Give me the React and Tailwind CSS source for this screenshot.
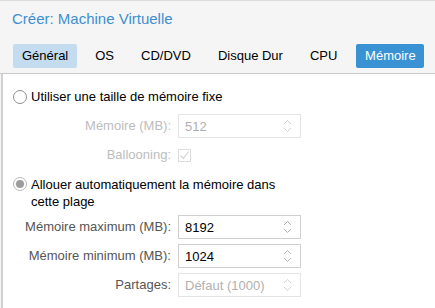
import React from "react";

const tabs = ["Général", "OS", "CD/DVD", "Disque Dur", "CPU", "Mémoire"];

const Spinner = ({ disabled }) => (
  <svg width="9" height="14" viewBox="0 0 9 14" className="shrink-0">
    <polyline
      points="1,5 4.5,1.5 8,5"
      fill="none"
      stroke={disabled ? "#d4d4d4" : "#b4b4b4"}
      strokeWidth="1"
    />
    <polyline
      points="1,9 4.5,12.5 8,9"
      fill="none"
      stroke={disabled ? "#d4d4d4" : "#b4b4b4"}
      strokeWidth="1"
    />
  </svg>
);

const NumberField = ({ value, disabled }) => (
  <div
    className={`w-[123px] h-[24px] flex items-center justify-between pl-[6px] pr-[8px] border bg-white ${
      disabled ? "border-[#e4e4e4] text-[#b0b0b0]" : "border-[#cfcfcf] text-black"
    }`}
  >
    <span className="pt-[2px]">{value}</span>
    <Spinner disabled={disabled} />
  </div>
);

const Row = ({ label, disabled, children }) => (
  <div className="flex items-center h-[24px]">
    <div
      className={`w-[168px] text-right ${
        disabled ? "text-[#bdbdbd]" : "text-[#555555]"
      }`}
    >
      {label}
    </div>
    <div className="ml-[7px]">{children}</div>
  </div>
);

const App = () => {
  return (
    <div className="w-[435px] h-[308px] overflow-hidden bg-[#f5f5f5] border-t border-[#dcdcdc] flex flex-col font-['Liberation_Sans',Arial,sans-serif] text-[13px]">
      {/* Title */}
      <div className="pt-[9px] pl-[12px] text-[15px] leading-[17px] text-[#3d8fd1]">
        Créer: Machine Virtuelle
      </div>

      {/* Tabs */}
      <div className="flex gap-[9px] pl-[13px] mt-[17px] pb-[5px] border-b border-[#c9c9c9]">
        {tabs.map((t) => (
          <div
            key={t}
            className={`h-[24px] flex items-center rounded-[2px] ${
              t === "Général"
                ? "px-[9px] bg-[#c4dcef] text-black"
                : t === "Mémoire"
                ? "ml-[1px] w-[68px] justify-center bg-[#3892d4] text-white"
                : "px-[9px] text-black"
            }`}
          >
            {t}
          </div>
        ))}
      </div>

      {/* Content */}
      <div className="flex-1 bg-white ml-px border-l-2 border-[#d2d2d2] pl-[10px] pt-[16px]">
        <div className="flex items-center h-[14px]">
          <span className="w-[14px] h-[14px] rounded-full border border-[#8f8f8f] bg-white" />
          <span className="ml-[4px] text-black">Utiliser une taille de mémoire fixe</span>
        </div>

        <div className="flex flex-col gap-[5px] mt-[10px] -ml-[10px]">
          <Row label="Mémoire (MB):" disabled>
            <NumberField value="512" disabled />
          </Row>
          <Row label="Ballooning:" disabled>
            <div className="w-[13px] h-[13px] border border-[#dcdcdc] flex items-center justify-center">
              <svg width="11" height="11" viewBox="0 0 11 11">
                <polyline
                  points="1.5,5.5 4.3,8.5 9.5,1.5"
                  fill="none"
                  stroke="#d0d0d0"
                  strokeWidth="1.1"
                />
              </svg>
            </div>
          </Row>
        </div>

        <div className="flex items-start mt-[9px]">
          <span className="mt-[1px] w-[14px] h-[14px] rounded-full border border-[#b8b8b8] bg-white flex items-center justify-center shrink-0">
            <span className="w-[8px] h-[8px] rounded-full bg-[#9c9c9c]" />
          </span>
          <span className="ml-[4px] leading-[17px] text-black w-[270px]">
            Allouer automatiquement la mémoire dans cette plage
          </span>
        </div>

        <div className="flex flex-col gap-[5px] mt-[5px] -ml-[10px]">
          <Row label="Mémoire maximum (MB):">
            <NumberField value="8192" />
          </Row>
          <Row label="Mémoire minimum (MB):">
            <NumberField value="1024" />
          </Row>
          <Row label="Partages:">
            <NumberField value="Défaut (1000)" disabled />
          </Row>
        </div>
      </div>
    </div>
  );
};

export default App;
